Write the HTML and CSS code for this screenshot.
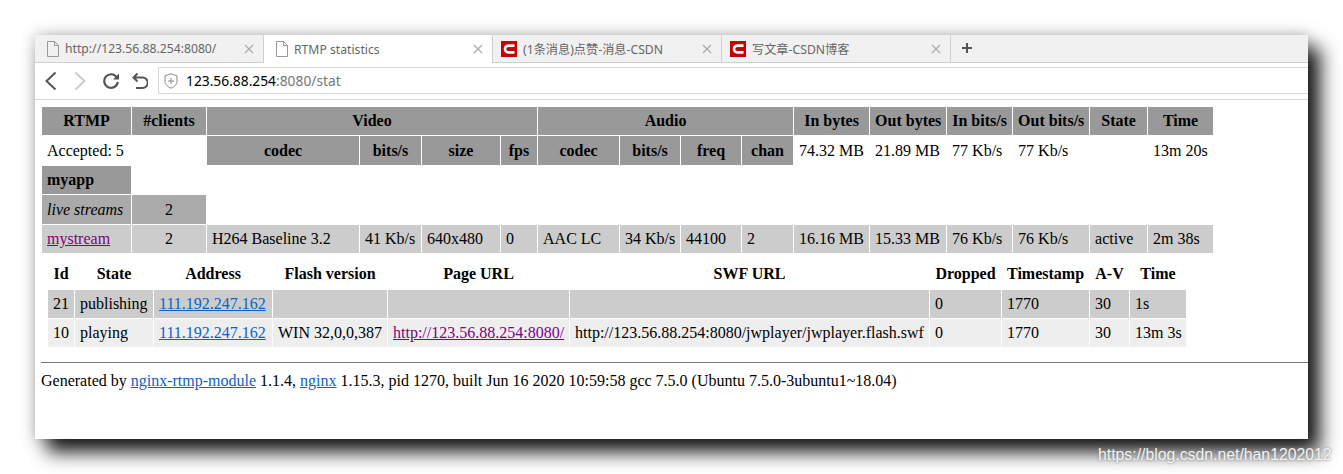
FILE: index.html
```html
<!DOCTYPE html>
<html>
    <head>
        <meta charset="utf-8">
        <title>RTMP statistics</title>
        <link rel="stylesheet" href="styles.css">
    </head>
    <body>
    <div class="window">
        <div class="tabs">
            <div class="tab">
                <svg class="tab-icon" viewBox="0 0 14 16"><path d="M1.5 .5h7l4 4v11h-11z M8.5 .5v4h4" fill="none" stroke="#999" stroke-width="1"/></svg>
                <span class="tab-title">http://123.56.88.254:8080/</span>
                <svg class="tab-close" viewBox="0 0 10 10"><path d="M1 1l8 8M9 1l-8 8" stroke="#aaa" stroke-width="1.2"/></svg>
            </div>
            <div class="tab tab-active">
                <svg class="tab-icon" viewBox="0 0 14 16"><path d="M1.5 .5h7l4 4v11h-11z M8.5 .5v4h4" fill="none" stroke="#999" stroke-width="1"/></svg>
                <span class="tab-title">RTMP statistics</span>
                <svg class="tab-close" viewBox="0 0 10 10"><path d="M1 1l8 8M9 1l-8 8" stroke="#aaa" stroke-width="1.2"/></svg>
            </div>
            <div class="tab">
                <svg class="tab-logo" viewBox="0 0 16 16"><rect width="16" height="16" fill="#c90000"/><path d="M13.5 4.6H8.2C5.6 4.6 4 6 4 8s1.6 3.4 4.2 3.4h5.3" fill="none" stroke="#fff" stroke-width="2.6"/></svg>
                <span class="tab-title">(1条消息)点赞-消息-CSDN</span>
                <svg class="tab-close" viewBox="0 0 10 10"><path d="M1 1l8 8M9 1l-8 8" stroke="#aaa" stroke-width="1.2"/></svg>
            </div>
            <div class="tab">
                <svg class="tab-logo" viewBox="0 0 16 16"><rect width="16" height="16" fill="#c90000"/><path d="M13.5 4.6H8.2C5.6 4.6 4 6 4 8s1.6 3.4 4.2 3.4h5.3" fill="none" stroke="#fff" stroke-width="2.6"/></svg>
                <span class="tab-title">写文章-CSDN博客</span>
                <svg class="tab-close" viewBox="0 0 10 10"><path d="M1 1l8 8M9 1l-8 8" stroke="#aaa" stroke-width="1.2"/></svg>
            </div>
            <svg class="tab-new" viewBox="0 0 12 12"><path d="M6 1v10M1 6h10" stroke="#555" stroke-width="2"/></svg>
        </div>

        <div class="toolbar">
            <svg class="nav-btn" viewBox="0 0 16 20"><path d="M10.500 1.500L1.500 10l9 8.500" fill="none" stroke="#555" stroke-width="2"/></svg>
            <svg class="nav-btn" viewBox="0 0 16 20"><path d="M1.500 1.500l9 8.500-9 8.500" fill="none" stroke="#ccc" stroke-width="2"/></svg>
            <svg class="nav-btn" viewBox="0 0 16 20"><path d="M13.800 6.400A6.800 6.800 0 1 0 14.800 11" fill="none" stroke="#555" stroke-width="2.200"/><path d="M16 2.500v6h-6z" fill="#555"/></svg>
            <svg class="nav-btn" viewBox="0 0 16 20"><path d="M5.500 2.500L1.500 6.500l4 4M2 6.500h8.500a5 5 0 0 1 0 10.500H4" fill="none" stroke="#555" stroke-width="2"/></svg>
            <div class="address">
                <svg class="shield" viewBox="0 0 14 16"><path d="M7 .8l6 2v5.400c0 3.300-2.600 5.600-6 7-3.400-1.400-6-3.700-6-7V2.800z M7 5v6M4 8h6" fill="none" stroke="#888" stroke-width="1"/></svg>
                <span class="host">123.56.88.254</span><span class="url-rest">:8080/stat</span>
            </div>
        </div>

        <div class="page">
            <table class="stat">
                <colgroup>
                    <col class="c89"><col class="c74"><col class="c152"><col class="c61"><col class="c78"><col class="c36">
                    <col class="c81"><col class="c60"><col class="c60"><col class="c51"><col class="c75"><col class="c76">
                    <col class="c65"><col class="c76"><col class="c57"><col class="c65">
                </colgroup>
                <tr class="head">
                    <th>RTMP</th><th>#clients</th><th colspan="4">Video</th><th colspan="4">Audio</th>
                    <th>In bytes</th><th>Out bytes</th><th>In bits/s</th><th>Out bits/s</th><th>State</th><th>Time</th>
                </tr>
                <tr class="tall">
                    <td colspan="2">Accepted: 5</td>
                    <th>codec</th><th>bits/s</th><th>size</th><th>fps</th>
                    <th>codec</th><th>bits/s</th><th>freq</th><th>chan</th>
                    <td>74.32 MB</td><td>21.89 MB</td><td>77 Kb/s</td><td>77 Kb/s</td><td></td><td>13m 20s</td>
                </tr>
                <tr>
                    <th class="app-name">myapp</th>
                    <td colspan="15"></td>
                </tr>
                <tr class="tall">
                    <td class="live-label"><i>live streams</i></td>
                    <td class="live-count">2</td>
                    <td colspan="14"></td>
                </tr>
                <tr class="stream">
                    <td><a class="visited" href="#">mystream</a></td>
                    <td class="center">2</td>
                    <td>H264 Baseline 3.2</td><td>41 Kb/s</td><td>640x480</td><td>0</td>
                    <td>AAC LC</td><td>34 Kb/s</td><td>44100</td><td>2</td>
                    <td>16.16 MB</td><td>15.33 MB</td><td>76 Kb/s</td><td>76 Kb/s</td><td>active</td><td>2m 38s</td>
                </tr>
                <tr>
                    <td colspan="16" class="clients-cell">
                        <table class="clients">
                            <colgroup>
                                <col class="c26"><col class="c78"><col class="c118"><col class="c114"><col class="c181">
                                <col class="c359"><col class="c71"><col class="c87"><col class="c39"><col class="c56">
                            </colgroup>
                            <tr class="tall">
                                <th>Id</th><th>State</th><th>Address</th><th>Flash version</th><th>Page URL</th>
                                <th>SWF URL</th><th>Dropped</th><th>Timestamp</th><th>A-V</th><th>Time</th>
                            </tr>
                            <tr class="publisher">
                                <td>21</td><td>publishing</td><td><a href="#">111.192.247.162</a></td><td></td><td></td><td></td>
                                <td>0</td><td>1770</td><td>30</td><td>1s</td>
                            </tr>
                            <tr class="player">
                                <td>10</td><td>playing</td><td><a href="#">111.192.247.162</a></td><td>WIN 32,0,0,387</td>
                                <td><a class="visited" href="#">http://123.56.88.254:8080/</a></td>
                                <td>http://123.56.88.254:8080/jwplayer/jwplayer.flash.swf</td>
                                <td>0</td><td>1770</td><td>30</td><td>13m 3s</td>
                            </tr>
                        </table>
                    </td>
                </tr>
            </table>
            <hr class="rule">
            Generated by <a href="#">nginx-rtmp-module</a> 1.1.4, <a href="#">nginx</a> 1.15.3, pid 1270, built Jun 16 2020 10:59:58 gcc 7.5.0 (Ubuntu 7.5.0-3ubuntu1~18.04)
        </div>
    </div>
    <div class="watermark">https://blog.csdn.net/han1202012</div>
    </body>
</html>
```

FILE: styles.css
```css
html, body {
    margin: 0;
    height: 100%;
    overflow: hidden;
    background-color: white;
}

.window {
    margin: 35px 0 0 35px;
    width: 1273px;
    height: 404px;
    background-color: white;
    box-shadow: 12px 13px 18px rgba(0, 0, 0, 0.9), 0 0 14px rgba(0, 0, 0, 0.25);
}

/* tab strip */
.tabs {
    display: flex;
    align-items: stretch;
    height: 27px;
    background-color: #f1f1f1;
    border-bottom: 1px solid #d0d0d0;
    font-family: "Noto Sans", "Noto Sans CJK SC", sans-serif;
    font-size: 12.2px;
    color: #666;
}
.tab {
    display: flex;
    align-items: center;
    box-sizing: border-box;
    width: 229px;
    padding: 0 9px 0 11px;
    border-right: 1px solid #d0d0d0;
}
.tab-active {
    background-color: white;
    height: 28px;
}
.tab-icon {
    width: 14px;
    height: 16px;
    margin-right: 5px;
    flex: none;
}
.tab-logo {
    width: 16px;
    height: 16px;
    margin: 0 6px 0 -3px;
    flex: none;
}
.tab-title {
    flex: 1;
    white-space: nowrap;
    overflow: hidden;
}
.tab-close {
    width: 10px;
    height: 10px;
    flex: none;
}
.tab-new {
    width: 12px;
    height: 12px;
    margin: 7px 0 0 10px;
}

/* address bar */
.toolbar {
    display: flex;
    align-items: center;
    box-sizing: border-box;
    height: 37px;
    padding: 4px 0 5px 10px;
    border-bottom: 1px solid #d8d8d8;
}
.nav-btn {
    width: 16px;
    height: 20px;
    margin-right: 13px;
    flex: none;
}
.address {
    flex: 1;
    display: flex;
    align-items: center;
    height: 27px;
    box-sizing: border-box;
    margin-left: -3px;
    border: 1px solid #d8d8d8;
    border-right: none;
    padding-left: 5px;
    font-family: "Noto Sans", sans-serif;
    font-size: 13.8px;
}
.shield {
    width: 14px;
    height: 16px;
    margin-right: 8px;
}
.host {
    color: black;
}
.url-rest {
    color: #777;
}

/* the stat page */
.page {
    padding: 6px 0 0 6px;
    font-family: "Liberation Serif", serif;
    font-size: 16px;
    color: black;
}
table {
    table-layout: fixed;
    border-collapse: separate;
    border-spacing: 1px;
}
.stat {
    width: 1173px;
}
.clients {
    width: 1140px;
}
th, td {
    height: 28px;
    padding: 0 5px;
    white-space: nowrap;
    box-sizing: border-box;
}
.tall > th, .tall > td {
    height: 29px;
}
.head > th, .tall > th, .app-name {
    background-color: #999;
}
.clients .tall > th {
    background-color: transparent;
    padding-bottom: 2px;
}
.app-name {
    text-align: left;
}
.live-label, .live-count {
    background-color: #aaa;
}
.live-count, .center {
    text-align: center;
}
.stream > td, .publisher > td {
    background-color: #ccc;
}
.player > td {
    background-color: #eee;
}
.clients-cell {
    padding: 5px;
}
a {
    color: #0b62c9;
}
a.visited {
    color: #800080;
}
.rule {
    margin: 8px 0 9px 0;
    border: none;
    border-top: 1px solid #777;
}

.c26 { width: 26px; }
.c36 { width: 36px; }
.c39 { width: 39px; }
.c51 { width: 51px; }
.c56 { width: 56px; }
.c57 { width: 57px; }
.c60 { width: 60px; }
.c61 { width: 61px; }
.c65 { width: 65px; }
.c71 { width: 71px; }
.c74 { width: 74px; }
.c75 { width: 75px; }
.c76 { width: 76px; }
.c78 { width: 78px; }
.c81 { width: 81px; }
.c87 { width: 87px; }
.c89 { width: 89px; }
.c114 { width: 114px; }
.c118 { width: 118px; }
.c152 { width: 152px; }
.c181 { width: 181px; }
.c359 { width: 359px; }

.watermark {
    position: absolute;
    left: 1098px;
    top: 446px;
    font-family: "Liberation Sans", sans-serif;
    font-size: 15.8px;
    color: #f2f2f2;
    text-shadow: 0 0 3px #777;
}
```
